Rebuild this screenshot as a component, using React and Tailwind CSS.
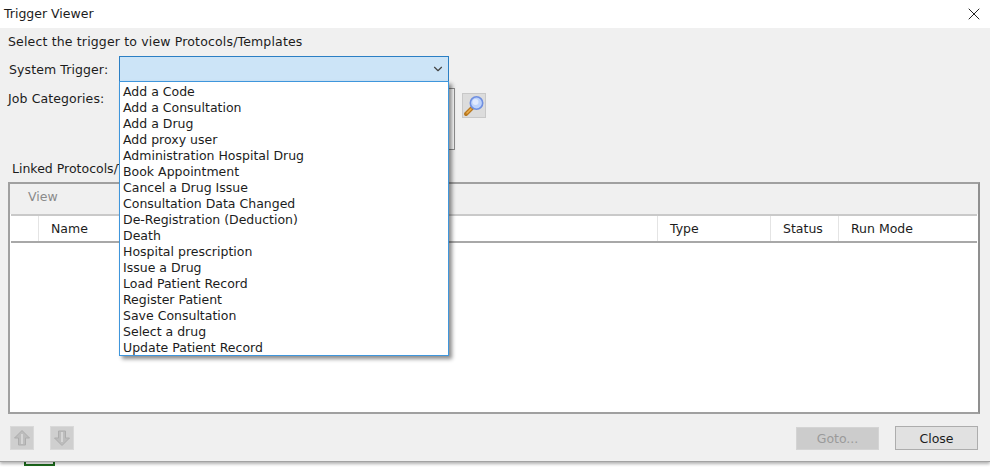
import { ChevronDown, X } from 'lucide-react';

const triggers = [
  'Add a Code',
  'Add a Consultation',
  'Add a Drug',
  'Add proxy user',
  'Administration Hospital Drug',
  'Book Appointment',
  'Cancel a Drug Issue',
  'Consultation Data Changed',
  'De-Registration (Deduction)',
  'Death',
  'Hospital prescription',
  'Issue a Drug',
  'Load Patient Record',
  'Register Patient',
  'Save Consultation',
  'Select a drug',
  'Update Patient Record',
];

function ArrowButton({ down }) {
  return (
    <button className="w-[24px] h-[24px] bg-[#cfcfcf] border border-[#d9d9d9] flex items-center justify-center">
      <svg width="18" height="18" viewBox="0 0 18 18" className={down ? 'rotate-180' : ''}>
        <path d="M9 1.5 L16.5 9 L12.5 9 L12.5 16 L5.5 16 L5.5 9 L1.5 9 Z" fill="#bdbdbd" stroke="#adadad" strokeWidth="1" />
        <path d="M8 5 L10 5 L10 15 L8 15 Z" fill="#d6d6d6" />
      </svg>
    </button>
  );
}

function SearchIcon() {
  return (
    <svg width="22" height="22" viewBox="0 0 22 22">
      <path d="M9 13 L3 19" stroke="#b9791f" strokeWidth="4" strokeLinecap="round" />
      <path d="M8 14 L4 18" stroke="#eeb04f" strokeWidth="1.5" strokeLinecap="round" />
      <circle cx="13.5" cy="8" r="6.2" fill="#bcd2fb" stroke="#6f8fe0" strokeWidth="1.6" />
      <circle cx="12.5" cy="7" r="3" fill="#dfe9fe" />
    </svg>
  );
}

export default function App() {
  return (
    <div className="relative w-[990px] h-[468px] overflow-hidden bg-white text-[12.5px] leading-[16px] text-[#1c1c1c] font-['DejaVu_Sans',sans-serif]">
      <div className="h-[462px] flex flex-col shadow-[0_2px_3px_rgba(0,0,0,0.3)] border-b border-[#a3a3a3] relative z-10 bg-[#f0f0f0]">
        {/* Title bar */}
        <div className="h-[28px] shrink-0 bg-white flex items-center justify-between pl-[4px] pr-[6px]">
          <span>Trigger Viewer</span>
          <X size={20} strokeWidth={1.2} className="text-[#222]" />
        </div>

        {/* Body */}
        <div className="flex-1 flex flex-col pl-[8px] pr-[10px] min-h-0">
          <div className="h-[28px] pt-[6px] tracking-[0.16px]">Select the trigger to view Protocols/Templates</div>

          <div className="flex items-center h-[26px]">
            <span className="w-[111px] pt-[2px] pl-[1px] tracking-[0.1px]">System Trigger:</span>
            <div className="relative w-[330px] h-[26px] border border-[#2b7fc4] bg-[#cce4f7] flex items-center justify-end pr-[3px]">
              <ChevronDown size={14} className="text-[#444]" />
              <ul className="absolute z-20 left-[-1px] top-[24px] w-[330px] h-[275px] bg-white border border-[#3f96dc] pt-[2px] pl-[3px] shadow-[3px_3px_4px_rgba(0,0,0,0.45)]">
                {triggers.map((t) => (
                  <li key={t} className="h-[16px] whitespace-nowrap">{t}</li>
                ))}
              </ul>
            </div>
          </div>

          <div className="flex h-[62px] mt-[6px]">
            <span className="w-[111px] pt-[3px] tracking-[0.1px]">Job Categories:</span>
            <div className="w-[336px] h-[62px] bg-white border border-[#8f8f8f]" />
            <button className="ml-[7px] mt-[5px] w-[24px] h-[25px] bg-[#dcdcdc] border border-[#c8c8c8] flex items-center justify-center">
              <SearchIcon />
            </button>
          </div>

          {/* the dropdown covers the end of this label */}
          <div className="h-[32px] pt-[11px] pl-[4px] w-[111px] overflow-hidden whitespace-nowrap">Linked Protocols/Templates</div>

          {/* Linked protocols group */}
          <div className="h-[232px] border-2 border-[#a0a0a0] border-r-[#8f8f8f] flex flex-col">
            <div className="h-[30px] shrink-0 flex items-center pl-[18px] pb-[4px] text-[#8a8a8a]">View</div>
            <div className="flex flex-1 flex-col bg-white">
              <div className="h-[29px] ml-[1px] mr-[1px] flex border-t-2 border-b-2 border-t-[#c9c9c9] border-b-[#a8a8a8] items-center">
                <div className="w-[28px] h-full border-r border-[#e4e4e4]" />
                <div className="w-[619px] h-full border-r border-[#e4e4e4] pl-[12px] flex items-center">Name</div>
                <div className="w-[113px] h-full border-r border-[#e4e4e4] pl-[12px] flex items-center">Type</div>
                <div className="w-[68px] h-full border-r border-[#e4e4e4] pl-[12px] flex items-center">Status</div>
                <div className="flex-1 h-full pl-[12px] flex items-center">Run Mode</div>
              </div>
            </div>
          </div>

          {/* Footer buttons */}
          <div className="flex items-start mt-[12px] pl-[2px]">
            <div className="flex gap-[16px]">
              <ArrowButton />
              <ArrowButton down />
            </div>
            <div className="ml-auto flex gap-[16px] pr-[2px]">
              <button className="w-[83px] h-[23px] mt-[1px] bg-[#cccccc] border border-[#d4d4d4] text-[#9a9a9a]">Goto...</button>
              <button className="w-[83px] h-[24px] pt-[1px] bg-[#e1e1e1] border border-[#adadad]">Close</button>
            </div>
          </div>
        </div>
      </div>
      {/* Window behind the dialog */}
      <div className="ml-[24px] w-[31px] h-[4px] border-x-2 border-b-2 border-[#1c6b1c]" />
    </div>
  );
}
